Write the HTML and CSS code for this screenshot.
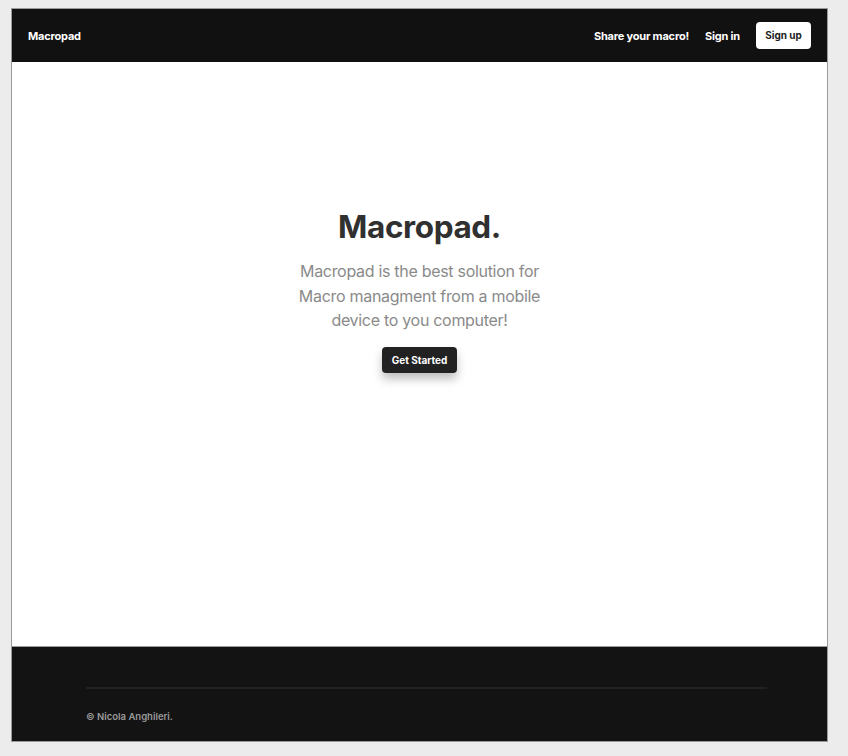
FILE: index.html
```html
<!DOCTYPE html>
<html lang="en">
<head>
<meta charset="utf-8">
<title>Macropad</title>
<link rel="stylesheet" href="styles.css">
</head>
<body>
<div class="page">
  <header class="nav">
    <a class="brand" href="#">Macropad</a>
    <nav class="links">
      <a href="#" class="link">Share your macro!</a>
      <a href="#" class="link">Sign in</a>
      <a href="#" class="signup">Sign up</a>
    </nav>
  </header>
  <main class="hero">
    <h1 class="title">Macropad.</h1>
    <p class="lead">Macropad is the best solution for Macro managment from a mobile device to you computer!</p>
    <a href="#" class="cta">Get Started</a>
  </main>
  <footer class="footer">
    <div class="rule"></div>
    <p class="copy">© Nicola Anghileri.</p>
  </footer>
</div>
</body>
</html>
```
FILE: styles.css
```css
html, body {
  margin: 0;
  padding: 0;
  background: #ececec;
  font-family: Inter, "Noto Sans", sans-serif;
}
body {
  padding: 8px 20px 14px 11px;
  height: 756px;
  box-sizing: border-box;
}
a { text-decoration: none; }
.page {
  height: 734px;
  display: flex;
  flex-direction: column;
  background: #fff;
  border: 1px solid #9a9a9a;
  box-sizing: border-box;
}
.nav {
  height: 53px;
  background: #111;
  display: flex;
  align-items: center;
  justify-content: space-between;
  padding: 0 16px 0 16px;
}
.brand {
  color: #fff;
  font-weight: 700;
  font-size: 11px;
  letter-spacing: -0.2px;
}
.links {
  display: flex;
  align-items: center;
}
.link {
  color: #fff;
  font-weight: 700;
  font-size: 11px;
  letter-spacing: -0.2px;
  margin-right: 16px;
}
.signup {
  background: #fff;
  color: #222;
  font-weight: 700;
  font-size: 10px;
  border-radius: 4px;
  height: 27px;
  line-height: 27px;
  width: 55px;
  text-align: center;
  white-space: nowrap;
}
.hero {
  flex: 1;
  display: flex;
  flex-direction: column;
  align-items: center;
  padding-top: 146px;
  box-sizing: border-box;
}
.title {
  margin: 0;
  font-size: 31.5px;
  font-weight: 700;
  color: #303030;
  letter-spacing: -0.4px;
  line-height: 38px;
}
.lead {
  margin: 13px 0 0;
  width: 250px;
  text-align: center;
  font-size: 16px;
  line-height: 24.5px;
  color: #8a8a8a;
  letter-spacing: -0.3px;
}
.cta {
  margin-top: 14px;
  background: #222;
  color: #fff;
  font-size: 10px;
  font-weight: 700;
  border-radius: 4px;
  height: 26px;
  line-height: 26px;
  padding: 0 10px;
  box-shadow: 0 6px 10px rgba(0,0,0,0.25);
}
.footer {
  height: 95px;
  background: #131313;
  border-top: 1px solid #9a9a9a;
  padding: 40px 60px 0 74px;
  box-sizing: border-box;
}
.rule {
  height: 2px;
  background: #222;
}
.copy {
  margin: 22px 0 0;
  font-size: 9.5px;
  color: #9a9a9a;
  font-weight: 600;
}
```
